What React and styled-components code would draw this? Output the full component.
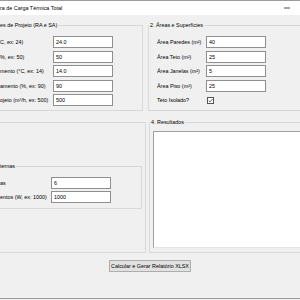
import React from 'react';
import styled, { createGlobalStyle } from 'styled-components';

const GlobalStyle = createGlobalStyle`
  html, body {
    margin: 0;
    padding: 0;
    width: 300px;
    height: 300px;
    overflow: hidden;
    background: #f0f0f0;
  }
  body {
    font-family: "Liberation Sans", Arial, sans-serif;
    font-size: 5.4px;
    color: #000;
  }
`

// the window is wider than the shot: its left and right edges fall outside
const Window = styled.div`
  margin-left: -9px;
  width: 341px;
  height: 297px;
  border-top: 1px solid #9c9c9c;
  border-bottom: 1px solid #9c9c9c;
  background: #f0f0f0;
  display: flex;
  flex-direction: column;
`

const TitleBar = styled.div`
  height: 14px;
  background: #fff;
  display: flex;
  align-items: center;
  padding-left: 9px;
`

const Title = styled.span`
  flex: 1;
  white-space: nowrap;
`

const Control = styled.div`
  width: 18px;
  height: 14px;
  display: flex;
  align-items: center;
  justify-content: center;
`

const Body = styled.div`
  padding: 6px 30px 0 7px;
  display: flex;
  flex-direction: column;
`

const Grid = styled.div`
  display: grid;
  grid-template-columns: 148px 1fr;
  column-gap: 2px;
  row-gap: 7px;
`

const Frame = styled.fieldset`
  margin: ${p => p.$mt || 0}px ${p => p.$mr || 0}px 0 ${p => p.$ml || 0}px;
  padding: ${p => p.$pad || '7px 0 4px 8px'};
  min-width: 0;
  border: 1px solid #d9d9d9;
  display: flex;
  flex-direction: column;
  gap: ${p => p.$gap ?? 2.5}px;
`

const Legend = styled.legend`
  margin-left: ${p => p.$ml || 0}px;
  padding: 0 1px;
  line-height: 8px;
  white-space: nowrap;
`

const Row = styled.div`
  display: grid;
  grid-template-columns: ${p => p.$label}px 60px;
  column-gap: 5px;
  align-items: center;
  height: 12px;
`

const Label = styled.span`
  white-space: nowrap;
`

const Entry = styled.input`
  box-sizing: border-box;
  width: 60px;
  height: 12px;
  margin: 0;
  padding: 0 2px;
  border: 1px solid #8f8f8f;
  background: #fff;
  font: inherit;
  color: #000;
  outline: none;
`

const Check = styled.span`
  box-sizing: border-box;
  width: 7px;
  height: 7px;
  margin-left: 1px;
  border: 1px solid #555;
  background: #fff;
  display: flex;
  align-items: center;
  justify-content: center;
`

const Results = styled.div`
  box-sizing: border-box;
  height: 117px;
  background: #fff;
  border: 1px solid;
  border-color: #a0a0a0 #e3e3e3 #e3e3e3 #a0a0a0;
`

const Footer = styled.div`
  display: flex;
  justify-content: center;
  margin-top: 7px;
`

const Button = styled.button`
  box-sizing: border-box;
  width: 82px;
  height: 12px;
  padding: 0;
  border: 1px solid #adadad;
  background: #e1e1e1;
  font: inherit;
  color: #000;
  white-space: nowrap;
`

const projeto = [
  ['C, ex: 24)', '24.0'],
  ['%, ex: 50)', '50'],
  ['mento (°C, ex: 14)', '14.0'],
  ['amento (%, ex: 90)', '90'],
  ['ojeto (m³/h, ex: 500)', '500'],
]

const areas = [
  ['Área Paredes (m²)', '40'],
  ['Área Teto (m²)', '25'],
  ['Área Janelas (m²)', '5'],
  ['Área Piso (m²)', '25'],
]

const internas = [
  ['as', '6'],
  ['entos (W, ex: 1000)', '1000'],
]

function Fields({ items, label }) {
  return items.map(([text, value]) => (
    <Row key={text} $label={label}>
      <Label>{text}</Label>
      <Entry defaultValue={value} />
    </Row>
  ))
}

export default function App() {
  return (
    <>
      <GlobalStyle />
      <Window>
        <TitleBar>
          <Title>ra de Carga Térmica Total</Title>
          <Control>
            <svg width="6" height="2" viewBox="0 0 6 2">
              <line x1="0" y1="1" x2="6" y2="1" stroke="#222" strokeWidth="0.8" />
            </svg>
          </Control>
          <Control />
          <Control />
        </TitleBar>
        <Body>
          <Grid>
            <Frame $mr={3} $pad="7px 0 4px 1px">
              <Legend $ml={-1}>es de Projeto (RA e SA)</Legend>
              <Fields items={projeto} label={48} />
            </Frame>
            <Frame>
              <Legend $ml={-8}>2. Áreas e Superfícies</Legend>
              <Fields items={areas} label={44} />
              <Row $label={44}>
                <Label>Teto Isolado?</Label>
                <Check>
                  <svg width="5" height="5" viewBox="0 0 5 5">
                    <path d="M0.6 2.6 L2 4 L4.5 1" fill="none" stroke="#333" strokeWidth="0.7" />
                  </svg>
                </Check>
              </Row>
            </Frame>
            <Frame $mt={4} $pad="39px 3px 5px 0" $gap={0}>
              <Frame $pad="7px 0 5px 0" $gap={2}>
                <Legend $ml={-1}>ternas</Legend>
                <Fields items={internas} label={46} />
              </Frame>
            </Frame>
            <Frame $ml={1} $pad="5px 0 4px 3px">
              <Legend $ml={-3}>4. Resultados</Legend>
              <Results />
            </Frame>
          </Grid>
          <Footer>
            <Button>Calcular e Gerar Relatório XLSX</Button>
          </Footer>
        </Body>
      </Window>
    </>
  )
}
